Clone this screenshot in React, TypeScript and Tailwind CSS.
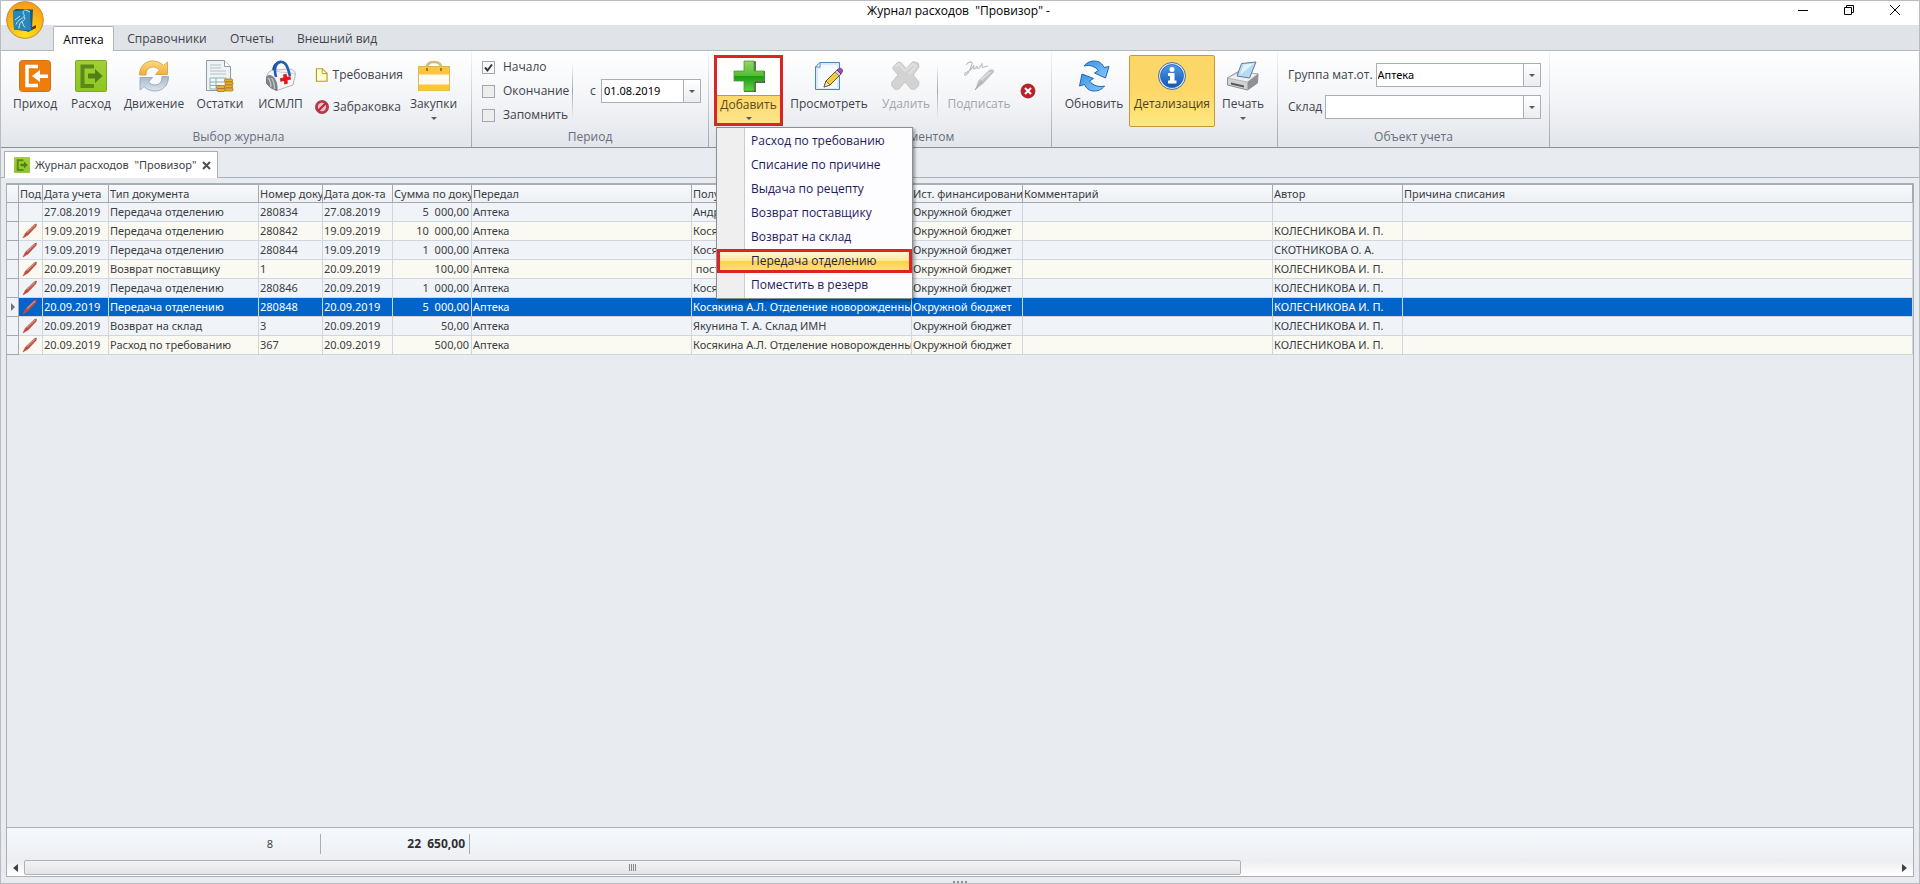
import { useId } from "react";
import type { ReactNode } from "react";

const RIBBON_FONT = "font-['Open_Sans','Noto_Sans',sans-serif]";

/* ---------- icons ---------- */

function LogoIcon() {
  return (
    <svg width="38" height="38" viewBox="0 0 38 38" aria-hidden="true">
      <defs>
        <radialGradient id="logoBg" cx="50%" cy="90%" r="90%">
          <stop offset="0" stopColor="#ffe11a" />
          <stop offset="0.5" stopColor="#fdbb10" />
          <stop offset="1" stopColor="#f79a1c" />
        </radialGradient>
      </defs>
      <circle cx="19" cy="19" r="18.3" fill="url(#logoBg)" stroke="#c98a2b" strokeWidth="1" />
      <path d="M26 26l4-2v3l-8 4-2-2z" fill="#4a4318" />
      <path d="M7 10l3-2 17 .5-1 19-3 3-15-2z" fill="#15597f" />
      <path d="M7 10l17-.8 1 20.300-17-1z" fill="#2a86b5" />
      <path
        d="M24 11l-3-1.500c-2-1-4 0-4 2s2 2 1 4-6 3-8 8m8-8c2 2 0 4-2 5s-3 3-3 7m3-7c1 2 1 4 3 6M9 19l5-4"
        fill="none"
        stroke="#d6eef8"
        strokeWidth="0.9"
      />
    </svg>
  );
}

function IncomeIcon() {
  return (
    <svg width="32" height="32" viewBox="0 0 32 32" aria-hidden="true">
      <rect x="0.5" y="0.5" width="31" height="31" rx="3" fill="#ef7d0c" stroke="#c9741f" />
      <path d="M19 6.500H8v19h11" fill="none" stroke="#fff" strokeWidth="3.500" />
      <path d="M13 16l8-6v4.500h8v3.500h-8v4z" fill="#fff" />
    </svg>
  );
}

function ExpenseIcon({ size = 32 }: { size?: number }) {
  return (
    <svg width={size} height={size} viewBox="0 0 32 32" aria-hidden="true">
      <defs>
        <linearGradient id={"exp" + size} x1="0" y1="0" x2="0" y2="1">
          <stop offset="0" stopColor="#a2cf35" />
          <stop offset="1" stopColor="#8cc71f" />
        </linearGradient>
      </defs>
      <rect x="0.5" y="0.5" width="31" height="31" rx="1" fill={"url(#exp" + size + ")"} stroke="#7fa92e" />
      <path d="M19 6.500H7.500v19.500h11.500" fill="none" stroke="#5a8a1a" strokeWidth="4" />
      <path d="M13 13.500h7V9l7.500 7-7.500 7v-4.500h-7z" fill="#4f7f17" />
    </svg>
  );
}

function MovementIcon() {
  return (
    <svg width="32" height="32" viewBox="0 0 32 32" aria-hidden="true">
      <defs>
        <linearGradient id="mvA" x1="0" y1="0" x2="0" y2="1">
          <stop offset="0" stopColor="#fbdc86" />
          <stop offset="1" stopColor="#efae35" />
        </linearGradient>
        <linearGradient id="mvB" x1="0" y1="0" x2="0" y2="1">
          <stop offset="0" stopColor="#a9b7cb" />
          <stop offset="1" stopColor="#dde4ee" />
        </linearGradient>
      </defs>
      <path d="M1.500 15C1.500 6 7.500 1 14.500 1c4.500 0 8 1.500 11 4.500L29.500 2v12.500H17.500L21.500 10C19.500 8 17.500 7 15 7c-4.500 0-7 3-7 8z" fill="url(#mvA)" stroke="#d89c34" strokeWidth="0.8" />
      <path d="M30.500 16.500c0 9-6 14.500-13.500 14.500-4.500 0-8-1.500-11-4.500L2 30V17.500h12.500L10.500 22c2 2 4 3 6.500 3 4.500 0 7-3 7-8.500z" fill="url(#mvB)" stroke="#8f9eb5" strokeWidth="0.8" />
    </svg>
  );
}

function BalanceIcon() {
  return (
    <svg width="32" height="32" viewBox="0 0 32 32" aria-hidden="true">
      <path d="M2.500 .5h18l6 6v24h-24z" fill="#eef3f6" stroke="#8d9ba6" />
      <path d="M20.500 .5v6h6" fill="#fff" stroke="#8d9ba6" />
      <path d="M6 5h11M6 8h11M6 11h16M6 14h16" stroke="#b4bfc8" strokeWidth="1" />
      <path d="M6 18h16v11H6zM6 22h16M6 25.500h10M12 18v11" fill="#f4f8f9" stroke="#8fb0b6" strokeWidth="1" />
      <g fill="#e9ae2e" stroke="#9c711c" strokeWidth="0.700">
        <rect x="20.500" y="19" width="8" height="3" rx="1" />
        <rect x="21" y="22" width="8" height="3" rx="1" />
        <rect x="20.500" y="25" width="8" height="3" rx="1" />
        <rect x="21" y="28" width="8" height="3" rx="1" />
        <rect x="12.500" y="25.500" width="8" height="3" rx="1" />
        <rect x="13" y="28.500" width="8" height="3" rx="1" />
      </g>
    </svg>
  );
}

function MedBagIcon() {
  return (
    <svg width="32" height="32" viewBox="0 0 32 32" aria-hidden="true">
      <path d="M8 12C8 5 12 1.500 16 2" fill="none" stroke="#184482" strokeWidth="2" />
      <path d="M2 15c1-3 4-5 8-5l13-1c4 0 7 2 7.500 5L28 25l-16 5.500C7 29 3 26 1.500 23z" fill="#f3f4f6" stroke="#a3a7ac" strokeWidth="0.8" />
      <path d="M1.500 17c2-2.500 5-2 7.500 1s3.500 8 3 12.500C7 29 3 26 1.500 23z" fill="#7f858c" stroke="#62676d" strokeWidth="0.700" />
      <path d="M3 18c2 2 3 5 3 9M6.500 18c2 3 3 6 3 11" fill="none" stroke="#c5c9ce" strokeWidth="1.300" />
      <path d="M10 11c7 2 14 1 20 3" fill="none" stroke="#c4c8cc" strokeWidth="0.900" />
      <path d="M11 17C8 7 12 1 17 2s6 7 8 14" fill="none" stroke="#1f5dae" strokeWidth="2.600" />
      <path d="M18 14.500l3.500-.7.500 3 3.500-.6.500 3.400-3.500.7.400 3.300-3.500.8-.5-3.300-3.500.6-.4-3.400 3.500-.7z" fill="#e3151b" />
    </svg>
  );
}

function NoteIcon() {
  return (
    <svg width="14" height="16" viewBox="0 0 14 16" aria-hidden="true">
      <path d="M1.500 1.500h6l5 5v8h-11z" fill="#fffbd2" stroke="#b5a11c" strokeWidth="1.200" />
      <path d="M7.500 1.500v5h5z" fill="#fff" stroke="#b5a11c" strokeWidth="1" />
    </svg>
  );
}

function ForbiddenIcon() {
  return (
    <svg width="14" height="14" viewBox="0 0 14 14" aria-hidden="true">
      <circle cx="7" cy="7" r="6.600" fill="#c23648" stroke="#8e3a45" strokeWidth="0.700" />
      <circle cx="7" cy="7" r="4.200" fill="#ecc0c5" />
      <path d="M3.500 10.500l7-7" stroke="#b42a3d" strokeWidth="2.200" />
    </svg>
  );
}

function PurchaseIcon() {
  return (
    <svg width="32" height="32" viewBox="0 0 32 32" aria-hidden="true">
      <path d="M8.500 9C8.500 4 12 2 16 2s7.500 2 7.500 7" fill="none" stroke="#cdbb80" strokeWidth="2.400" />
      <rect x="0.500" y="6.500" width="31" height="24" fill="#fffaf0" stroke="#e0b850" />
      <rect x="1" y="7" width="30" height="7.500" fill="#fcc53a" />
      <rect x="1" y="24.500" width="30" height="6" fill="#fcc53a" />
      <rect x="8" y="8" width="2" height="3" fill="#a67c1a" />
      <rect x="22" y="8" width="2" height="3" fill="#a67c1a" />
    </svg>
  );
}

function PlusIcon() {
  return (
    <svg width="32" height="32" viewBox="0 0 32 32" aria-hidden="true">
      <defs>
        <linearGradient id="plusG" x1="0" y1="0" x2="0" y2="1">
          <stop offset="0" stopColor="#8fd868" />
          <stop offset="0.480" stopColor="#58bd34" />
          <stop offset="0.520" stopColor="#1c9c12" />
          <stop offset="1" stopColor="#5fd246" />
        </linearGradient>
      </defs>
      <path d="M12 2h10v10h10v10h-10v10h-10v-10" fill="none" stroke="#1f3a1a" strokeWidth="1.400" />
      <path d="M11 1h10v10h10v10h-10v10h-10v-10h-10v-10h10z" fill="url(#plusG)" stroke="#4a9a34" strokeWidth="0.800" />
    </svg>
  );
}

function ViewIcon() {
  return (
    <svg width="32" height="32" viewBox="0 0 32 32" aria-hidden="true">
      <path d="M7 2.500h19.500v27H2.500V7z" fill="#dcebf9" stroke="#4c86bb" />
      <path d="M7 2.500V7H2.500z" fill="#fff" stroke="#4c86bb" strokeWidth="0.900" />
      <path d="M5 28V9h3V5h16v23z" fill="#f6fafe" />
      <path d="M11 27l2-6 11-11 4 4-11 11z" fill="#f4cb3e" stroke="#5d4a2c" strokeWidth="0.900" />
      <path d="M11 27l2-6 4 4z" fill="#f6e3c2" stroke="#5d4a2c" strokeWidth="0.700" />
      <path d="M22 12l2-2 4 4-2 2z" fill="#c9ced8" stroke="#555" strokeWidth="0.600" />
      <path d="M24 10l2-1.500c2-1 4 1 3.500 3L28 14z" fill="#a349b8" stroke="#6b2a86" strokeWidth="0.800" />
    </svg>
  );
}

function DeleteIcon() {
  return (
    <svg width="32" height="32" viewBox="0 0 32 32" aria-hidden="true">
      <path
        d="M3 7l5-5 3 .5 5 6 7-7 5 1.500 1 4-6 8 6 7-.5 4-4 3.500-3.500-.5-6-7-6 7-4 .5-3.500-4 .5-3.500 6-7-5-6z"
        fill="#d3d3d3"
        stroke="#c6c6c6"
        strokeLinejoin="round"
      />
      <path d="M5 7l4-3 6 7 8-7 3 2-7 8" fill="none" stroke="#e0e0e0" strokeWidth="2" />
    </svg>
  );
}

function SignIcon() {
  return (
    <svg width="32" height="32" viewBox="0 0 32 32" aria-hidden="true">
      <path d="M3 5c3-4 7-4 6-1S5 14 3 15s-2-2 1-3 6-5 7-7c0 3-1 4 0 4s2-1 3-3c0 2 0 3 2 2l3-4c0 3 0 4 2 3l4-1" fill="none" stroke="#bdbdbd" strokeWidth="1.100" />
      <path d="M12 30l3-9L26 10c3-2 6 0 5 2L20 24z" fill="#c4c4c4" />
      <path d="M12 30l7-9" stroke="#a2a2a2" />
      <path d="M18 20l9-8" stroke="#e2e2e2" strokeWidth="1.500" />
    </svg>
  );
}

function CancelIcon() {
  return (
    <svg width="16" height="16" viewBox="0 0 16 16" aria-hidden="true">
      <circle cx="8" cy="8" r="7" fill="#bd2127" stroke="#8d1a20" strokeWidth="0.800" />
      <path d="M5 5l6 6M11 5l-6 6" stroke="#fff" strokeWidth="2" />
    </svg>
  );
}

function RefreshIcon() {
  return (
    <svg width="32" height="32" viewBox="0 0 32 32" aria-hidden="true">
      <defs>
        <linearGradient id="rfG" x1="0" y1="0" x2="1" y2="1">
          <stop offset="0" stopColor="#3d93e2" />
          <stop offset="1" stopColor="#86c8fb" />
        </linearGradient>
      </defs>
      <path d="M6 6c3-4 7-5 10.500-5 5 0 8 3 9.500 6.500l5-1-3.500 11.500-11-5 4-2.500C17 6.500 12 4.500 6 6z" fill="url(#rfG)" stroke="#1e66b8" />
      <path d="M26.500 26c-3 4-7 5-10.500 5-5 0-8-3-9.500-6.500l-5 1.500L4 14l11.500 4.500-4 2.500c3.500 4.500 9 6.500 15 5z" fill="url(#rfG)" stroke="#1e66b8" />
    </svg>
  );
}

function InfoIcon() {
  return (
    <svg width="32" height="32" viewBox="0 0 32 32" aria-hidden="true">
      <defs>
        <linearGradient id="infG" x1="0" y1="0" x2="0" y2="1">
          <stop offset="0" stopColor="#4d9be9" />
          <stop offset="1" stopColor="#1454b4" />
        </linearGradient>
      </defs>
      <circle cx="16" cy="16" r="13.500" fill="#dfeaf5" stroke="#4a70a5" />
      <circle cx="16" cy="16" r="11.500" fill="url(#infG)" stroke="#2a66b8" strokeWidth="0.800" />
      <circle cx="16" cy="9.500" r="2.500" fill="#fff" />
      <path d="M12 13h6.500v7.500h2v3h-8.500v-3h2v-4.500h-2z" fill="#fff" />
    </svg>
  );
}

function PrinterIcon() {
  return (
    <svg width="32" height="32" viewBox="0 0 32 32" aria-hidden="true">
      <path d="M.5 18l10-6 20.500 2-.5 9-10 7L.5 25z" fill="#d0d2d4" stroke="#77797c" strokeWidth="0.800" />
      <path d="M.5 18l20 4 10.500-8-8-1H10z" fill="#f0f0f1" stroke="#9a9c9f" strokeWidth="0.600" />
      <path d="M20.500 22v8l10-7 .5-9z" fill="#8f9194" />
      <path d="M10 16l4.500-12.500L29 2l-6.500 16z" fill="#b5daf8" stroke="#5b6f83" strokeWidth="0.900" />
      <path d="M13 15l3.500-10.500L27 3.500z" fill="#e2f2fe" />
      <path d="M4 22.500l13 3v2L4 24.500z" fill="#54575a" />
    </svg>
  );
}

function PenMark() {
  return (
    <svg width="16" height="16" viewBox="0 0 16 16" aria-hidden="true">
      <path d="M1 15l2.500-5 9-8.500 2-.5-.5 2.500L6 12z" fill="#cf4535" stroke="#b5543f" strokeWidth="0.600" />
      <path d="M5 9.500l8-7.500" stroke="#b59a94" strokeWidth="1.200" />
    </svg>
  );
}

function DownArrow() {
  return (
    <svg width="6" height="3" viewBox="0 0 6 3" aria-hidden="true">
      <path d="M0 0h6L3 3z" fill="#555a61" />
    </svg>
  );
}

/* ---------- ribbon parts ---------- */

function RibbonGroup({ label, className, children }: { label?: string; className: string; children: ReactNode }) {
  return (
    <section className={"flex shrink-0 " + className}>
      <div className="flex min-w-0 flex-1 flex-col">
        <div className="flex h-[77px] pt-[4px]">{children}</div>
        <div className="text-center leading-[18px] text-[#686e7c]">{label}</div>
      </div>
      <div className="w-px bg-gradient-to-b from-[#f4f5f7] to-[#a4a9af]" />
    </section>
  );
}

function BigButton({
  icon,
  label,
  width,
  arrow,
  disabled,
}: {
  icon: ReactNode;
  label: string;
  width: string;
  arrow?: boolean;
  disabled?: boolean;
}) {
  return (
    <button
      type="button"
      disabled={disabled}
      className={"flex h-[72px] shrink-0 flex-col items-center whitespace-nowrap pt-[5px] " + width + (disabled ? " text-[#a3a5a8]" : "")}
    >
      {icon}
      <span className="mt-[3px] leading-[18px]">{label}</span>
      {arrow && (
        <span className="mt-[4px] flex">
          <DownArrow />
        </span>
      )}
    </button>
  );
}

function Check({ label, checked }: { label: string; checked?: boolean }) {
  return (
    <label className="flex h-[24px] items-center gap-[8px]">
      <span className="relative flex h-[13px] w-[13px]">
        <input
          type="checkbox"
          defaultChecked={checked}
          className="peer h-[13px] w-[13px] appearance-none border border-[#a2a7ad] bg-[#ededee] checked:bg-[#f7f8f9]"
        />
        <svg className="pointer-events-none absolute inset-0 hidden peer-checked:block" width="13" height="13" viewBox="0 0 13 13" aria-hidden="true">
          <path d="M3 6.500l2.500 3L10 3.500" fill="none" stroke="#33363b" strokeWidth="2" />
        </svg>
      </span>
      {label}
    </label>
  );
}

function Combo({ label, value }: { label: string; value: string }) {
  const id = useId();
  return (
    <div className="flex h-[32px] items-center gap-[3px] whitespace-nowrap">
      <label htmlFor={id}>{label}</label>
      <div className="relative h-[24px] flex-1">
        <select
          id={id}
          defaultValue={value}
          className="h-full w-full appearance-none border border-[#a9afb7] bg-white pl-px font-['Noto_Sans',sans-serif] text-[11px] text-black"
        >
          <option>{value}</option>
        </select>
        <span className="pointer-events-none absolute inset-y-0 right-0 flex w-[18px] items-center justify-center border border-[#a9afb7] bg-gradient-to-b from-white to-[#e9ecf0]">
          <DownArrow />
        </span>
      </div>
    </div>
  );
}

const MENU = [
  "Расход по требованию",
  "Списание по причине",
  "Выдача по рецепту",
  "Возврат поставщику",
  "Возврат на склад",
  "Передача отделению",
  "Поместить в резерв",
];

function AddMenu() {
  return (
    <ul
      role="menu"
      className="absolute left-[2px] top-[72px] z-20 w-[197px] border border-[#8b8f96] bg-[linear-gradient(to_right,#efeff0_27px,#c9cbd0_27px,#c9cbd0_28px,#fdfcff_28px)] py-px shadow-[2px_2px_3px_rgba(0,0,0,0.35)]"
    >
      {MENU.map((item) => (
        <li key={item} role="none">
          <button
            type="button"
            role="menuitem"
            className={
              item === "Передача отделению"
                ? "block h-[24px] w-full border-[3px] border-[#dc2427] bg-[linear-gradient(#fff8d9,#fde795_50%,#fcd04a_50%,#fde27a)] pl-[31px] text-left leading-[18px] text-[#26233f]"
                : "block h-[24px] w-full pl-[34px] text-left leading-[24px] text-[#1d1b5e]"
            }
          >
            {item}
          </button>
        </li>
      ))}
    </ul>
  );
}

function Ribbon() {
  return (
    <div className="flex h-[97px] border-b border-[#8d9197] bg-gradient-to-b from-white via-[#f3f5f8] to-[#e2e5ea]">
      <RibbonGroup label="Выбор журнала" className="w-[471px] pl-[5px]">
        <BigButton icon={<IncomeIcon />} label="Приход" width="w-[58px]" />
        <BigButton icon={<ExpenseIcon />} label="Расход" width="w-[54px]" />
        <BigButton icon={<MovementIcon />} label="Движение" width="w-[72px]" />
        <BigButton icon={<BalanceIcon />} label="Остатки" width="w-[60px]" />
        <BigButton icon={<MedBagIcon />} label="ИСМЛП" width="w-[61px]" />
        <div className="flex w-[92px] shrink-0 flex-col whitespace-nowrap pt-[4px] pl-[4px]">
          <button type="button" className="flex h-[32px] items-center gap-[4px]">
            <NoteIcon />
            Требования
          </button>
          <button type="button" className="flex h-[32px] items-center gap-[4px]">
            <ForbiddenIcon />
            Забраковка
          </button>
        </div>
        <BigButton icon={<PurchaseIcon />} label="Закупки" width="w-[61px]" arrow />
      </RibbonGroup>

      <RibbonGroup label="Период" className="w-[237px]">
        <div className="flex w-[100px] flex-col pl-[10px]">
          <Check label="Начало" checked />
          <Check label="Окончание" />
          <Check label="Запомнить" />
        </div>
        <div className="mt-[8px] h-[56px] w-px bg-gradient-to-b from-transparent via-[#a4a9af] to-transparent" />
        <div className="flex h-[72px] items-center pl-[17px]">
          <label htmlFor="dateFrom" className="w-[11px]">
            с
          </label>
          <div className="flex h-[24px] w-[100px] border border-[#a9afb7] bg-white">
            <input
              id="dateFrom"
              defaultValue="01.08.2019"
              className="min-w-0 flex-1 pl-[2px] font-['Noto_Sans',sans-serif] text-[11px] text-black"
            />
            <button
              type="button"
              aria-label="Выбрать дату"
              className="flex w-[17px] items-center justify-center border-l border-[#a9afb7] bg-gradient-to-b from-white to-[#e9ecf0]"
            >
              <DownArrow />
            </button>
          </div>
        </div>
      </RibbonGroup>

      <RibbonGroup label="Операции с документом" className="w-[343px] pl-[5px]">
        <div className="relative">
          <button type="button" className="flex h-[71px] w-[69px] flex-col items-center border-[3px] border-[#dc2427] bg-white pt-[2px]">
            <PlusIcon />
            <span className="mt-[3px] flex w-full flex-1 flex-col items-center border-t border-[#c39a3a] bg-gradient-to-b from-[#fcd868] to-[#fde58d] leading-[18px] text-[#5c4a1e]">
              Добавить
              <span className="mt-[3px] flex">
                <DownArrow />
              </span>
            </span>
          </button>
          <AddMenu />
        </div>
        <BigButton icon={<ViewIcon />} label="Просмотреть" width="w-[92px]" />
        <BigButton icon={<DeleteIcon />} label="Удалить" width="w-[62px]" disabled />
        <div className="mt-[8px] h-[56px] w-px bg-gradient-to-b from-transparent via-[#a4a9af] to-transparent" />
        <BigButton icon={<SignIcon />} label="Подписать" width="w-[82px]" disabled />
        <button type="button" aria-label="Отменить" className="flex h-[72px] items-center">
          <CancelIcon />
        </button>
      </RibbonGroup>

      <RibbonGroup className="w-[226px] pl-[7px]">
        <BigButton icon={<RefreshIcon />} label="Обновить" width="w-[70px]" />
        <button
          type="button"
          className="flex h-[72px] w-[86px] shrink-0 flex-col items-center rounded-[2px] border border-[#c39a3a] bg-gradient-to-b from-[#fbd768] via-[#fdd768] to-[#fee97f] pt-[4px] text-[#4d421f]"
        >
          <InfoIcon />
          <span className="mt-[3px] leading-[18px]">Детализация</span>
        </button>
        <BigButton icon={<PrinterIcon />} label="Печать" width="w-[56px]" arrow />
      </RibbonGroup>

      <RibbonGroup label="Объект учета" className="w-[272px]">
        <div className="flex flex-1 flex-col pt-[4px] pr-[8px] pl-[10px]">
          <Combo label="Группа мат.от." value="Аптека" />
          <Combo label="Склад" value="" />
        </div>
      </RibbonGroup>
    </div>
  );
}

/* ---------- journal table ---------- */

const HEADERS = [
  "",
  "Под",
  "Дата учета",
  "Тип документа",
  "Номер доку",
  "Дата док-та",
  "Сумма по доку",
  "Передал",
  "Получил",
  "Ист. финансирования",
  "Комментарий",
  "Автор",
  "Причина списания",
];

type Row = { signed: boolean; date: string; type: string; num: string; sum: string; to: string; author: string };

const NEWBORN = "Косякина А.Л. Отделение новорожденных";
const ROWS: Row[] = [
  { signed: false, date: "27.08.2019", type: "Передача отделению", num: "280834", sum: "5  000,00", to: "Андреева", author: "" },
  { signed: true, date: "19.09.2019", type: "Передача отделению", num: "280842", sum: "10  000,00", to: NEWBORN, author: "КОЛЕСНИКОВА И. П." },
  { signed: true, date: "19.09.2019", type: "Передача отделению", num: "280844", sum: "1  000,00", to: NEWBORN, author: "СКОТНИКОВА О. А." },
  { signed: true, date: "20.09.2019", type: "Возврат поставщику", num: "1", sum: "100,00", to: " поставщик", author: "КОЛЕСНИКОВА И. П." },
  { signed: true, date: "20.09.2019", type: "Передача отделению", num: "280846", sum: "1  000,00", to: NEWBORN, author: "КОЛЕСНИКОВА И. П." },
  { signed: true, date: "20.09.2019", type: "Передача отделению", num: "280848", sum: "5  000,00", to: NEWBORN, author: "КОЛЕСНИКОВА И. П." },
  { signed: true, date: "20.09.2019", type: "Возврат на склад", num: "3", sum: "50,00", to: "Якунина Т. А. Склад ИМН", author: "КОЛЕСНИКОВА И. П." },
  { signed: true, date: "20.09.2019", type: "Расход по требованию", num: "367", sum: "500,00", to: NEWBORN, author: "КОЛЕСНИКОВА И. П." },
];
const SELECTED = 5;

function Journal() {
  return (
    <table className="w-full table-fixed border-separate border-spacing-0 whitespace-pre text-[#3a3d42]">
      <colgroup>
        <col className="w-[12px]" />
        <col className="w-[24px]" />
        <col className="w-[66px]" />
        <col className="w-[150px]" />
        <col className="w-[64px]" />
        <col className="w-[70px]" />
        <col className="w-[79px]" />
        <col className="w-[220px]" />
        <col className="w-[220px]" />
        <col className="w-[111px]" />
        <col className="w-[250px]" />
        <col className="w-[130px]" />
        <col />
      </colgroup>
      <thead>
        <tr className="h-[18px] bg-gradient-to-b from-[#f8fafc] to-[#eceff4]">
          {HEADERS.map((h, i) => (
            <th
              key={i}
              scope="col"
              className="overflow-hidden border-r border-b border-[#a4a9af] p-0 pl-px text-left font-normal leading-[17px]"
            >
              {h}
            </th>
          ))}
        </tr>
      </thead>
      <tbody>
        {ROWS.map((r, i) => {
          const sel = i === SELECTED;
          const cells = [r.date, r.type, r.num, r.date, r.sum, "Аптека", r.to, "Окружной бюджет", "", r.author, ""];
          return (
            <tr key={i} className={"h-[19px] " + (sel ? "bg-[#0264c8] text-white" : i % 2 ? "bg-[#fbfaf2]" : "bg-[#f0f4f9]")}>
              <td className="border-r border-b border-[#a4a9af] bg-[#eff2f6] p-0">
                {sel && (
                  <svg className="mx-auto block" width="4" height="8" viewBox="0 0 4 8" aria-hidden="true">
                    <path d="M0 0l4 4-4 4z" fill="#6d7278" />
                  </svg>
                )}
              </td>
              <td className="border-r border-b border-[#cfd6df] p-0 pl-[3px]">{r.signed && <PenMark />}</td>
              {cells.map((c, j) => (
                <td
                  key={j}
                  className={"overflow-hidden border-r border-b border-[#cfd6df] p-0 leading-[18px] " + (j === 4 ? "pr-[2px] text-right" : "pl-px")}
                >
                  {c}
                </td>
              ))}
            </tr>
          );
        })}
      </tbody>
    </table>
  );
}

/* ---------- window ---------- */

function TitleBar() {
  return (
    <header className="flex h-[24px] items-center bg-white">
      <div className="relative w-[136px]">
        <div className="absolute -top-[12px] left-[5px] z-10">
          <LogoIcon />
        </div>
      </div>
      <h1 className="flex-1 whitespace-pre pb-[4px] text-center text-[12px] leading-[16px] text-black">{'Журнал расходов  "Провизор" -'}</h1>
      <div className="flex w-[139px] pr-px pb-[6px] text-black">
        <button type="button" aria-label="Свернуть" className="flex w-[46px] justify-center">
          <svg width="10" height="10" viewBox="0 0 10 10" aria-hidden="true">
            <path d="M0 5.500h10" stroke="#000" />
          </svg>
        </button>
        <button type="button" aria-label="Восстановить" className="flex w-[46px] justify-center">
          <svg width="10" height="10" viewBox="0 0 10 10" fill="none" stroke="#000" aria-hidden="true">
            <path d="M.5 2.500h7v7h-7zM2.500 2.500v-2h7v7h-2" />
          </svg>
        </button>
        <button type="button" aria-label="Закрыть" className="flex w-[46px] justify-center">
          <svg width="10" height="10" viewBox="0 0 10 10" stroke="#000" aria-hidden="true">
            <path d="M0 0l10 10M10 0L0 10" />
          </svg>
        </button>
      </div>
    </header>
  );
}

function Tabs() {
  return (
    <nav className="flex h-[26px] items-end border-b border-[#b4b8be] bg-[#e0e4e8] pl-[52px]">
      <a href="#apteka" className="-mb-px flex h-[25px] w-[61px] items-center justify-center rounded-t-[2px] border border-b-0 border-[#b4b8be] bg-white pt-[2px] text-black">
        Аптека
      </a>
      <a href="#ref" className="flex h-[25px] w-[106px] items-center justify-center pt-[3px]">
        Справочники
      </a>
      <a href="#reports" className="flex h-[25px] w-[64px] items-center justify-center pt-[3px]">
        Отчеты
      </a>
      <a href="#view" className="flex h-[25px] w-[106px] items-center justify-center pt-[3px]">
        Внешний вид
      </a>
    </nav>
  );
}

export default function App() {
  return (
    <div className={"flex h-screen flex-col overflow-hidden border border-[#b9bcc0] bg-[#e8ebf0] text-[12px] leading-[18px] text-[#3f4349] " + RIBBON_FONT}>
      <TitleBar />
      <Tabs />
      <Ribbon />
      <div className="flex h-[30px] shrink-0 items-end border-b border-[#a9afb7] pl-[3px]">
        <div className="-mb-px flex h-[27px] w-[214px] items-center border border-b-0 border-[#a9afb7] bg-white pl-[9px] font-['Noto_Sans',sans-serif] text-[11px]">
          <ExpenseIcon size={16} />
          <span className="ml-[5px] flex-1 whitespace-pre">{'Журнал расходов  "Провизор"'}</span>
          <button type="button" aria-label="Закрыть вкладку" className="mr-[6px]">
            <svg width="9" height="9" viewBox="0 0 9 9" stroke="#4b4f55" strokeWidth="2" aria-hidden="true">
              <path d="M1 1l7 7M8 1L1 8" />
            </svg>
          </button>
        </div>
      </div>
      <main className="mx-[5px] mt-[5px] flex min-h-0 flex-1 flex-col border border-t-2 border-[#a9afb7] font-['Noto_Sans',sans-serif] text-[11px]">
        <div className="min-h-0 flex-1 overflow-hidden">
          <Journal />
        </div>
        <div className="flex h-[32px] shrink-0 items-center border-t border-[#a9afb7] bg-gradient-to-b from-[#f6f9fc] to-[#eceff4]">
          <div className="flex h-[20px] w-[314px] items-center justify-end border-r border-[#a9afb7] pr-[47px]">8</div>
          <div className="flex h-[20px] w-[149px] items-center justify-end border-r border-[#a9afb7] pr-[4px] text-[12px]">
            <span className="whitespace-pre font-bold text-[#2c2e32]">22  650,00</span>
          </div>
        </div>
        <div className="flex h-[17px] shrink-0 items-center bg-gradient-to-b from-[#ececee] to-white">
          <button type="button" aria-label="Прокрутить влево" className="flex w-[17px] justify-center">
            <svg width="5" height="8" viewBox="0 0 5 8" aria-hidden="true">
              <path d="M5 0v8L0 4z" fill="#3e4146" />
            </svg>
          </button>
          <div className="flex flex-1">
            <div className="flex h-[15px] w-[65%] items-center justify-center gap-px rounded-[2px] border border-[#adb2b8] bg-gradient-to-b from-[#f3f3f4] to-[#e3e3e5]">
              <span className="h-[7px] w-px bg-[#85898f]" />
              <span className="h-[7px] w-px bg-[#85898f]" />
              <span className="h-[7px] w-px bg-[#85898f]" />
              <span className="h-[7px] w-px bg-[#85898f]" />
            </div>
          </div>
          <button type="button" aria-label="Прокрутить вправо" className="flex w-[17px] justify-center">
            <svg width="5" height="8" viewBox="0 0 5 8" aria-hidden="true">
              <path d="M0 0v8l5-4z" fill="#3e4146" />
            </svg>
          </button>
        </div>
      </main>
      <div className="flex h-[6px] shrink-0 items-end justify-center gap-[2px]">
        <span className="h-[2px] w-[2px] bg-[#8d9197]" />
        <span className="h-[2px] w-[2px] bg-[#8d9197]" />
        <span className="h-[2px] w-[2px] bg-[#8d9197]" />
        <span className="h-[2px] w-[2px] bg-[#8d9197]" />
      </div>
    </div>
  );
}
